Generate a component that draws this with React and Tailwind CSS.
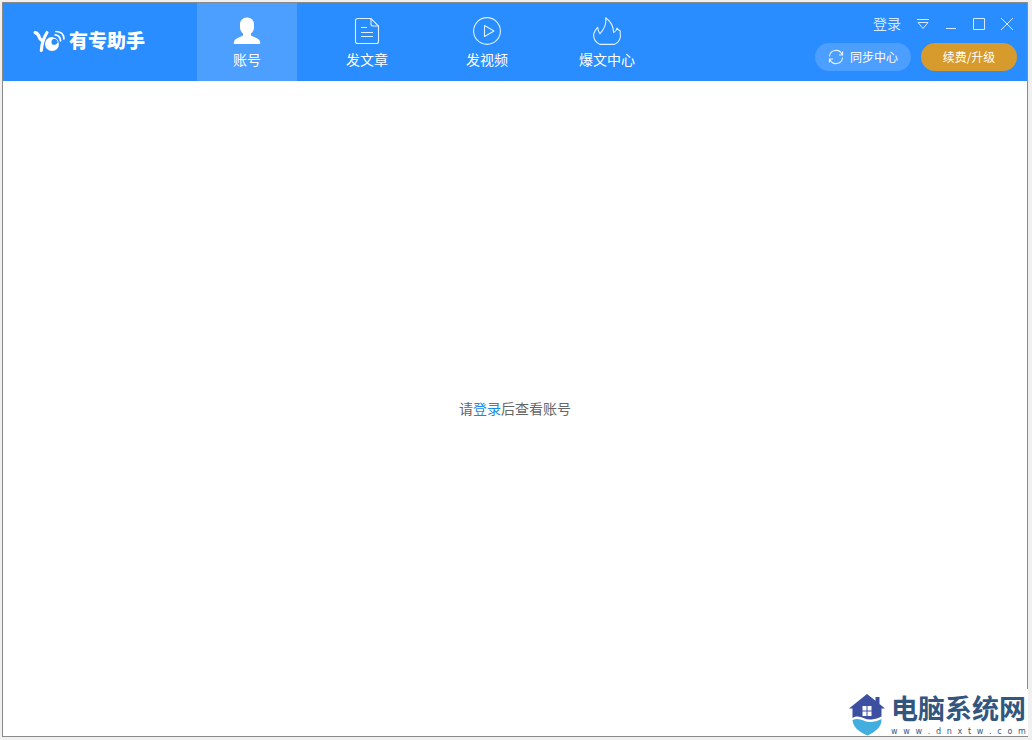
import React, { useState } from 'react';

const UserIcon = () => (
  <svg width="28" height="28" viewBox="0 0 28 28" fill="#fff" aria-hidden="true">
    <rect x="7" y="0.500" width="14" height="17" rx="6.500" />
    <path d="M10 14h8v4.500c2.400 1.500 6.200 2.200 8 4.300.9 1 1.200 2.200 1.200 4.200H.8c0-2 .4-3.200 1.200-4.200 1.800-2.100 5.600-2.800 8-4.300z" />
  </svg>
);

const ArticleIcon = () => (
  <svg width="28" height="28" viewBox="0 0 28 28" fill="none" stroke="#dcf2ff" strokeWidth="1.1" aria-hidden="true">
    <path d="M18 1.500H4.500a2 2 0 0 0-2 2v21a2 2 0 0 0 2 2h19a2 2 0 0 0 2-2V9z" />
    <path d="M18 1.500V7a2 2 0 0 0 2 2h5.500" />
    <path d="M8 10.500h6M8 15.500h12M8 19.500h12" />
  </svg>
);

const VideoIcon = () => (
  <svg width="28" height="28" viewBox="0 0 28 28" fill="none" stroke="#dcf2ff" strokeWidth="1.1" strokeLinejoin="round" aria-hidden="true">
    <circle cx="14" cy="14" r="13.400" />
    <path d="M11.500 8.500v11l9.500-5.500z" />
  </svg>
);

const FireIcon = () => (
  <svg width="28" height="28" viewBox="0 0 28 28" fill="none" stroke="#dcf2ff" strokeWidth="1.1" strokeLinejoin="round" aria-hidden="true">
    <path d="M7 27.400C3 25.500.6 22.500.6 18.500c0-3.500 1.900-5.500 4.100-8.200.2 2.300.6 4.200 2.300 6.400 3.800-4 6.800-9 5.600-16C17.500 4 20.300 9 20.700 15.500c1.700-.8 2.800-2.300 3.300-4.500.4 1.400 1.200 2 3.300 3-.6 1.800.3 3 .1 5.500-.3 3.500-2.400 6.300-6.400 7.900z" />
  </svg>
);

const SyncIcon = () => (
  <svg width="16" height="16" viewBox="0 0 16 16" fill="none" stroke="#e6f3ff" strokeWidth="1.100" aria-hidden="true">
    <path d="M1.500 7.500A6.500 6.500 0 0 1 14 5.500M14.500 8.500A6.500 6.500 0 0 1 2 10.500" />
    <path d="M14.600 2.500V6h-3.600M1.400 13.500V10H5" />
  </svg>
);

const LogoIcon = () => (
  <svg width="32" height="24" viewBox="0 0 32 24" fill="none" aria-hidden="true">
    <path d="M2.200 2.600c2.200.4 3.200 2 3.900 4.200.6 1.700 1.200 2.900 2.400 3.200" stroke="#fff" strokeWidth="3.400" strokeLinecap="round" />
    <path d="M14 2.500C11.800 6 8.900 12 8.300 20.500" stroke="#fff" strokeWidth="3.200" strokeLinecap="round" />
    <circle cx="19" cy="14" r="7" fill="#fff" />
    <path d="M19 14.200c-1.200-2.400-.3-4.700 1.800-5.400 2.300 0 3.700 1.600 3.900 3.600-1.300 2.200-3.600 2.900-5.700 1.800z" fill="#298cff" />
    <path d="M20.500 6.800c4 .4 6 2.600 6.200 6.600" stroke="#298cff" strokeWidth="1.600" />
    <path d="M22.200 4.800c3.700.6 5.300 2.700 5.300 6" stroke="#fff" strokeWidth="1.800" strokeLinecap="round" />
    <path d="M23 1.500c5 .3 8 3.200 7.900 7.500" stroke="#fff" strokeWidth="1.700" strokeLinecap="round" />
  </svg>
);

const HouseIcon = () => (
  <svg width="36" height="42" viewBox="0 0 36 42" aria-hidden="true">
    <path d="M18 0 0 14.500h3.500V24c7-4.500 12 2.500 19 1.500 4-.5 7-1.500 10-3v-8H36L30.500 10V3h-4v3.800z" fill="#3c4fa1" />
    <path d="M13.500 12h4v4.500h-4zM18.500 12h4v4.500h-4zM13.500 17.500h4V22h-4zM18.500 17.500h4V22h-4z" fill="#fff" />
    <path d="M3.500 26c7-3.500 12 2.500 19 2 4-.3 7-1.500 10-3 .5 7-5 12.500-14 16.500C9.500 37.500 4 33 3.500 26z" fill="#42aee0" />
  </svg>
);

const tabs = [
  { id: 'account', label: '账号', icon: <UserIcon /> },
  { id: 'article', label: '发文章', icon: <ArticleIcon /> },
  { id: 'video', label: '发视频', icon: <VideoIcon /> },
  { id: 'hot', label: '爆文中心', icon: <FireIcon /> },
];

const WindowControls = () => (
  <div className="flex items-center gap-4 text-[#d6eaff]">
    <button className="pb-[2px] text-sm leading-5">登录</button>
    <button aria-label="菜单">
      <svg width="12" height="12" viewBox="0 0 12 12" fill="none" stroke="currentColor">
        <path d="M0 1.500h12M1 4.500h10L6 10.500z" />
      </svg>
    </button>
    <button aria-label="最小化">
      <svg width="12" height="12" viewBox="0 0 12 12" fill="none" stroke="currentColor">
        <path d="M1 10.500h10" />
      </svg>
    </button>
    <button aria-label="最大化">
      <svg width="12" height="12" viewBox="0 0 12 12" fill="none" stroke="currentColor">
        <path d="M.5.5h11v11H.5z" />
      </svg>
    </button>
    <button aria-label="关闭">
      <svg width="12" height="12" viewBox="0 0 12 12" fill="none" stroke="currentColor">
        <path d="M0 0l12 12M12 0 0 12" />
      </svg>
    </button>
  </div>
);

const Watermark = () => (
  <div className="absolute right-1 bottom-1 flex items-end gap-[6px] bg-white pr-[2px] pl-1">
    <HouseIcon />
    <div className="text-[#33567f]">
      <div className="text-[27px] leading-[38px] font-bold">电脑系统网</div>
      <div className="flex justify-between font-['DejaVu_Sans',sans-serif] text-[8px] leading-[9px]">
        {'www.dnxtw.com'.split('').map((char, i) => (
          <span key={i}>{char}</span>
        ))}
      </div>
    </div>
  </div>
);

const App = () => {
  const [activeTab, setActiveTab] = useState('account');

  return (
    <div className="relative flex min-h-screen flex-col bg-[#f0f0f0] pt-[2px] pr-1 pb-[3px] pl-[2px] font-['Noto_Sans_CJK_SC',sans-serif]">
      <div className="flex flex-1 flex-col border border-[#8a8a8a] bg-white">
        <header className="flex h-[78px] bg-[#298cff] text-white">
          <div className="flex w-[194px] items-center gap-1 pl-[30px]">
            <LogoIcon />
            <h1 className="pb-1 text-[19px] leading-6 font-black">有专助手</h1>
          </div>
          <nav className="flex gap-5">
            {tabs.map((tab) => (
              <button
                key={tab.id}
                onClick={() => setActiveTab(tab.id)}
                className={`flex w-[100px] flex-col items-center gap-1 pt-[14px] text-sm leading-5 ${
                  activeTab === tab.id ? 'bg-[#4c9eff]' : ''
                }`}
              >
                {tab.icon}
                {tab.label}
              </button>
            ))}
          </nav>
          <div className="ml-auto flex flex-col items-end gap-2 pt-[10px] pr-[10px]">
            <div className="pr-1">
              <WindowControls />
            </div>
            <div className="flex gap-[10px] text-xs">
              <button className="flex h-7 w-24 items-center justify-center gap-[6px] rounded-full bg-[#4c9eff]">
                <SyncIcon />
                同步中心
              </button>
              <button className="h-7 w-24 rounded-full bg-[#d69a2d]">续费/升级</button>
            </div>
          </div>
        </header>
        <main className="flex flex-1 items-center justify-center pb-[2px]">
          <p className="text-sm text-[#666]">
            请<a href="#login" className="text-[#1989e6]">登录</a>后查看账号
          </p>
        </main>
      </div>
      <Watermark />
    </div>
  );
};

export default App;
